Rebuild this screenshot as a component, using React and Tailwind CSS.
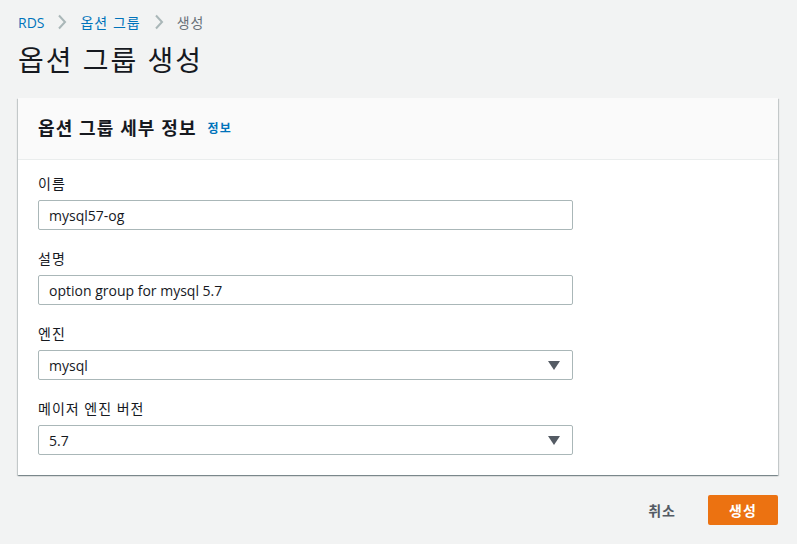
const font = { fontFamily: '"Open Sans", "Noto Sans CJK KR", sans-serif' }

function Chevron() {
  return (
    <svg className="mx-[13px]" width="10" height="16" viewBox="0 0 10 16">
      <path d="M2 1.5 L8 8 L2 14.5" fill="none" stroke="#aab7b8" strokeWidth="2" />
    </svg>
  )
}

function Field({ label, value, select }) {
  return (
    <div className="flex flex-col">
      <label className="h-[20px] text-[14px] leading-[20px] tracking-[1px] text-[#16191f] mb-[6px]">{label}</label>
      <div className="relative w-[535px] h-[30px] border border-[#aab7b8] rounded-[2px] bg-white flex items-center px-[10px]">
        <span className="text-[14px] text-[#16191f]">{value}</span>
        {select && (
          <svg className="absolute right-[12px] top-[10px]" width="12" height="9" viewBox="0 0 12 9">
            <path d="M0 0 L12 0 L6 9 Z" fill="#545b64" />
          </svg>
        )}
      </div>
    </div>
  )
}

export default function App() {
  return (
    <div className="min-h-[544px] bg-[#f2f3f3] px-[18px] pt-[12px]" style={font}>
      {/* Breadcrumb */}
      <div className="flex items-center h-[20px] text-[14px]">
        <span className="text-[#0073bb]">RDS</span>
        <Chevron />
        <span className="text-[#0073bb] tracking-[1px]">옵션 그룹</span>
        <Chevron />
        <span className="text-[#687078] tracking-[1px]">생성</span>
      </div>

      <h1 className="text-[28px] leading-[40px] mt-[8px] tracking-[2px] text-[#16191f] font-normal">옵션 그룹 생성</h1>

      {/* Card */}
      <div className="mt-[18px] w-[760px] bg-white shadow-[0_1px_1px_0_rgba(0,28,36,0.3),1px_1px_1px_0_rgba(0,28,36,0.15),-1px_1px_1px_0_rgba(0,28,36,0.15)]">
        <div className="h-[62px] bg-[#fafafa] border-b border-[#eaeded] flex items-center px-[20px]">
          <span className="text-[18px] font-bold tracking-[1.1px] text-[#16191f]">옵션 그룹 세부 정보</span>
          <span className="ml-[11px] text-[12px] font-bold tracking-[1px] text-[#0073bb]">정보</span>
        </div>
        <div className="px-[20px] pt-[14px] pb-[20px] flex flex-col gap-[19px]">
          <Field label="이름" value="mysql57-og" />
          <Field label="설명" value="option group for mysql 5.7" />
          <Field label="엔진" value="mysql" select />
          <Field label="메이저 엔진 버전" value="5.7" select />
        </div>
      </div>

      {/* Actions */}
      <div className="w-[760px] flex justify-end items-center mt-[20px] gap-[12px]">
        <button className="px-[20px] h-[30px] text-[14px] font-bold tracking-[1px] text-[#545b64]">취소</button>
        <button className="w-[70px] h-[30px] rounded-[2px] bg-[#ec7211] text-white text-[14px] font-bold tracking-[1px]">생성</button>
      </div>
    </div>
  )
}
